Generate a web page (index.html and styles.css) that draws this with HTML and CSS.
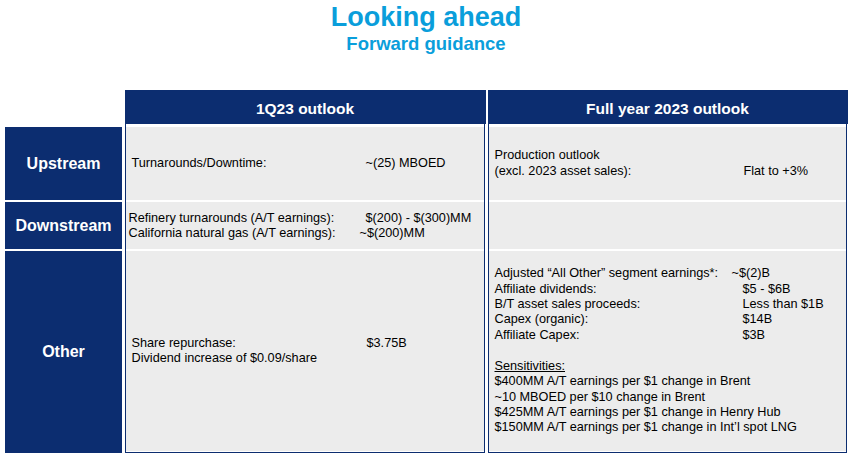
FILE: index.html
```html
<!DOCTYPE html>
<html lang="en">
<head>
<meta charset="utf-8">
<title>Looking ahead</title>
<link rel="stylesheet" href="styles.css">
</head>
<body>
<div class="page">
  <header class="title-block">
    <h1 class="title">Looking ahead</h1>
    <h2 class="subtitle">Forward guidance</h2>
  </header>

  <main class="board">
    <div class="labels">
      <div class="label up">Upstream</div>
      <div class="label down">Downstream</div>
      <div class="label other">Other</div>
    </div>

    <section class="panel quarter">
      <div class="panel-head">1Q23 outlook</div>
      <div class="rows">
        <div class="cell up">
          <div class="line"><span>Turnarounds/Downtime:</span><span>~(25) MBOED</span></div>
        </div>
        <div class="cell down">
          <div class="line"><span>Refinery turnarounds (A/T earnings):</span><span>$(200) - $(300)MM</span></div>
          <div class="line"><span>California natural gas (A/T earnings):</span><span class="hang">~$(200)MM</span></div>
        </div>
        <div class="cell other">
          <div class="line"><span>Share repurchase:</span><span>$3.75B</span></div>
          <div class="line"><span>Dividend increase of $0.09/share</span></div>
        </div>
      </div>
    </section>

    <section class="panel year">
      <div class="panel-head">Full year 2023 outlook</div>
      <div class="rows">
        <div class="cell up">
          <div class="line"><span>Production outlook</span></div>
          <div class="line"><span>(excl. 2023 asset sales):</span><span>Flat to +3%</span></div>
        </div>
        <div class="cell down"></div>
        <div class="cell other">
          <div class="line"><span>Adjusted “All Other” segment earnings*:</span><span class="hang-wide">~$(2)B</span></div>
          <div class="line"><span>Affiliate dividends:</span><span>$5 - $6B</span></div>
          <div class="line"><span>B/T asset sales proceeds:</span><span>Less than $1B</span></div>
          <div class="line"><span>Capex (organic):</span><span>$14B</span></div>
          <div class="line"><span>Affiliate Capex:</span><span>$3B</span></div>
          <div class="spacer"></div>
          <div class="line full"><span class="underline">Sensitivities:</span></div>
          <div class="line full"><span>$400MM A/T earnings per $1 change in Brent</span></div>
          <div class="line full"><span>~10 MBOED per $10 change in Brent</span></div>
          <div class="line full"><span>$425MM A/T earnings per $1 change in Henry Hub</span></div>
          <div class="line full"><span>$150MM A/T earnings per $1 change in Int’l spot LNG</span></div>
        </div>
      </div>
    </section>
  </main>
</div>
</body>
</html>
```

FILE: styles.css
```css
* {
  box-sizing: border-box;
}

html, body {
  margin: 0;
  padding: 0;
  background: #ffffff;
}

body {
  font-family: "Liberation Sans", Arial, sans-serif;
  color: #000000;
}

.page {
  width: 852px;
  height: 457px;
  overflow: hidden;
}

.title-block {
  text-align: center;
  padding-top: 4px;
  color: #0a9edb;
}

.title {
  margin: 0;
  font-size: 27px;
  line-height: 27px;
  font-weight: 700;
}

.subtitle {
  margin: 3px 0 0;
  font-size: 18.5px;
  line-height: 20px;
  font-weight: 700;
}

.board {
  display: flex;
  gap: 3px;
  margin-top: 36px;
  padding-left: 5px;
}

.labels {
  width: 117px;
  padding-top: 37px;
  display: flex;
  flex-direction: column;
  gap: 2px;
}

.label {
  background: #0c2d70;
  color: #ffffff;
  font-weight: 700;
  font-size: 16px;
  display: flex;
  align-items: center;
  justify-content: center;
}

.label.up { height: 73px; }
.label.down { height: 47px; }
.label.other { height: 202px; }

.panel {
  background: #ffffff;
  border: 1.5px solid #0c2d70;
  border-top: 0;
  display: flex;
  flex-direction: column;
}

.panel.quarter { width: 360px; }
.panel.year { width: 359px; }

.panel-head {
  height: 34px;
  margin: 0 -1.5px;
  background: #0c2d70;
  color: #ffffff;
  font-weight: 700;
  font-size: 15.5px;
  display: flex;
  align-items: center;
  justify-content: center;
  padding-top: 3px;
}

.rows {
  margin-top: 3px;
  display: flex;
  flex-direction: column;
  gap: 2px;
}

.cell {
  background: #ececec;
  display: flex;
  flex-direction: column;
  justify-content: center;
  font-size: 12.7px;
  padding-left: 5.5px;
}

.cell.up { height: 73px; }
.cell.down { height: 47px; }
.cell.other { height: 200px; }

.quarter .cell { line-height: 14.7px; }
.year .cell { line-height: 15.4px; }

.line {
  display: grid;
  white-space: nowrap;
}

.quarter .cell.up .line { grid-template-columns: 234px auto; }
.quarter .cell.down { padding-left: 2.5px; }
.quarter .cell.down .line { grid-template-columns: 237px auto; }
.quarter .cell.other .line { grid-template-columns: 235px auto; }

.year .cell.up .line { grid-template-columns: 249px auto; }
.year .cell.up { line-height: 15.6px; }
.year .cell.other .line { grid-template-columns: 248px auto; }
.year .cell.other .line.full { grid-template-columns: auto; }

.hang { margin-left: -6px; }
.hang-wide { margin-left: -11px; }

.spacer { height: 15.4px; }

.underline { text-decoration: underline; }
```
